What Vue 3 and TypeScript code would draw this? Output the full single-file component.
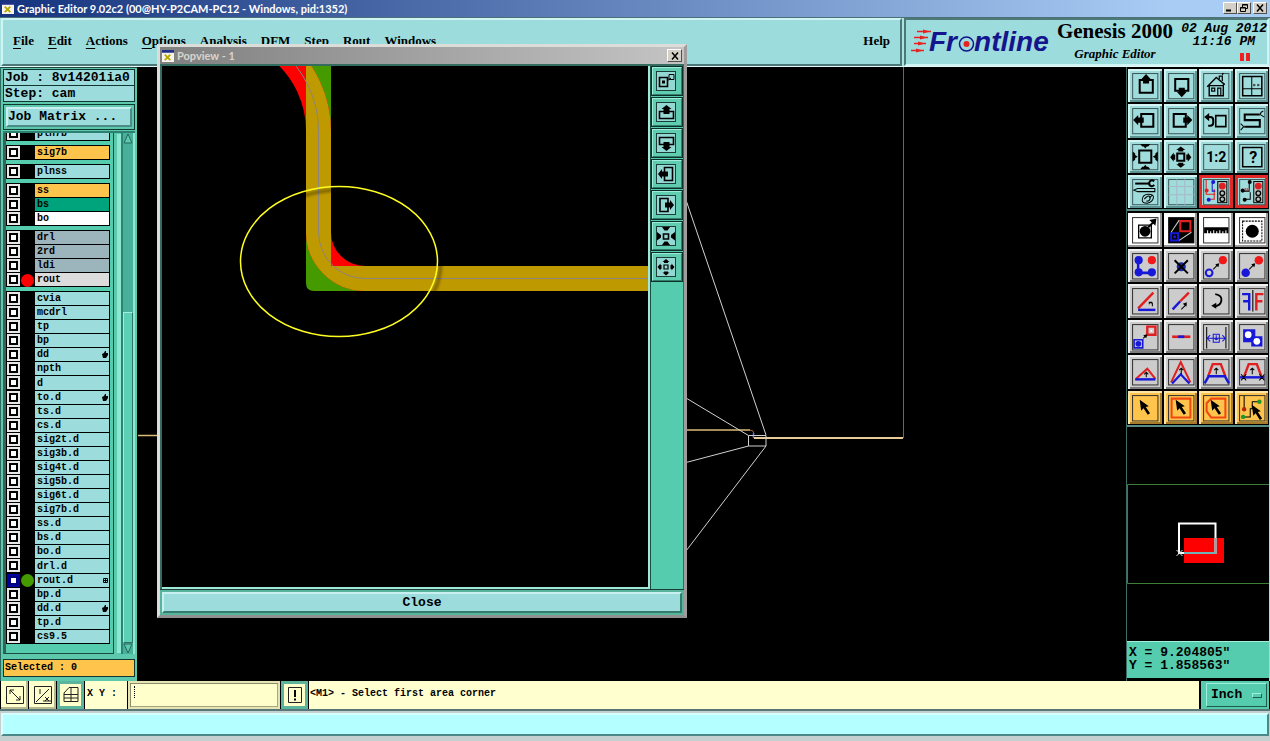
<script setup lang="ts">
import { ref } from 'vue'

interface Layer {
  name: string
  tone?: string
  dot?: string
  mark?: string
  on?: boolean
}

interface Tool {
  label: string
  art: string
  kind?: string
}

const menus = ['File', 'Edit', 'Actions', 'Options', 'Analysis', 'DFM', 'Step', 'Rout', 'Windows']

const plain = (names: string[]): Layer[] => names.map((name) => ({ name }))

const groups = ref<Layer[][]>([
  [{ name: 'pln7b' }],
  [{ name: 'sig7b', tone: 'amber' }],
  [{ name: 'plnss' }],
  [
    { name: 'ss', tone: 'amber' },
    { name: 'bs', tone: 'green' },
    { name: 'bo', tone: 'white' },
  ],
  [
    { name: 'drl', tone: 'slate' },
    { name: '2rd', tone: 'slate' },
    { name: 'ldi', tone: 'slate' },
    { name: 'rout', tone: 'grey', dot: 'red' },
  ],
  [
    ...plain(['cvia', 'mcdrl', 'tp', 'bp']),
    { name: 'dd', mark: 'hand' },
    ...plain(['npth', 'd']),
    { name: 'to.d', mark: 'hand' },
    ...plain(['ts.d', 'cs.d', 'sig2t.d', 'sig3b.d', 'sig4t.d', 'sig5b.d', 'sig6t.d', 'sig7b.d', 'ss.d', 'bs.d', 'bo.d', 'drl.d']),
    { name: 'rout.d', dot: 'lime', mark: 'grid', on: true },
    { name: 'bp.d' },
    { name: 'dd.d', mark: 'hand' },
    ...plain(['tp.d', 'cs9.5']),
  ],
])

const R = '#e02020'
const B = '#1818d8'
const line = (d: string, c = '#000', w = 1) => `<path d="${d}" fill="none" stroke="${c}" stroke-width="${w}"/>`
const fill = (d: string, c = '#000') => `<path d="${d}" fill="${c}"/>`
const dot = (x: number, y: number, r: number, c = '#000') => `<circle cx="${x}" cy="${y}" r="${r}" fill="${c}"/>`
const ring = (x: number, y: number, r: number, c = '#000', w = 1) =>
  `<circle cx="${x}" cy="${y}" r="${r}" fill="none" stroke="${c}" stroke-width="${w}"/>`
const lights = `<rect x="18.5" y="6.5" width="9" height="21" fill="#b8c4c4" stroke="#000"/>` +
  dot(23, 11, 3.4, R) + ring(23, 18, 2.3, '#000', 1.3) + ring(23, 24, 2.3, '#000', 1.3)

const viewTools: Tool[] = [
  { label: 'Pan up', art: line('M11.5 11h13v12.500h-13z', '#000', 2) + fill('M17.800 5l5 5.500h-2v4h-6v-4h-2z') },
  { label: 'Pan down', art: line('M11 10h13v11.500h-13z', '#000', 2) + fill('M17.500 28l5-5.500h-2v-4h-6v4h-2z') },
  {
    label: 'Home',
    art: line('M8 17.500L17 8.500 25.500 15.500M10 16.500v10h14v-11M9.500 16.500h15', '#000', 1.4) +
      line('M12.500 19h3v3h-3zM18.500 26v-7h3v7M20 10V7h3v5M23 6l1-2', '#000', 1.2),
  },
  { label: 'Window layout', art: line('M7.500 7.500h19v19h-19z', '#000', 1.5) + line('M16.500 7.500v19M7.500 19.500h19') + line('M18 17l2-2m0 2l-2-2M22 17l2-2m0 2l-2-2', '#444') },
  { label: 'Pan left', art: line('M13 10h12v12.500H13z', '#000', 2) + fill('M5 16l5-5v2.500h5.500v5H10V21z') },
  { label: 'Pan right', art: line('M9.500 10h12v12.500h-12z', '#000', 2) + fill('M28 16l-5-5v2.500h-4v5h4V21z') },
  { label: 'Previous view', art: line('M16.500 11.500h10v11h-10z', '#000', 1.6) + line('M8 13h3q3 0 3 3v2.500q0 3-3 3H9', '#000', 2) + fill('M5 13l5-4v8z') },
  { label: 'Swap', art: line('M24.500 10.500h-15V16h15v6.500H9', '#000', 2) + line('M28 7q-3 1-3 3.500M29 13l-4-2.500M5.500 19.500l3 3M5.500 26l3-3.500') },
  {
    label: 'Zoom out',
    art: line('M11 10.500h12v12H11z', '#000', 2) +
      fill('M12 4h10l-2 2.500h-1.500l-1.500 2-1.500-2H14zM12 29h10l-2-2.500h-1.500l-1.500-2-1.500 2H14zM4.500 11.500v10l2.500-2V18l2.500-1.500L7 15v-1.500zM29.500 11.500v10l-2.500-2V18l-2.500-1.500L27 15v-1.500z'),
  },
  {
    label: 'Zoom in',
    art: line('M13 13.500h7v7h-7z', '#000', 2) +
      fill('M16.500 6.500l4.500 3.500h-2v1.500h-5V10h-2zM16.500 27.500l4.500-3.500h-2v-1.500h-5V24h-2zM6 17l3.500-4.500v2H11v5H9.500v2zM27 17l-3.500-4.500v2H22v5h1.500v2z'),
  },
  { label: 'Scale one to two', art: '<text x="17" y="21.500" font-family="Roboto, sans-serif" font-size="14" font-weight="700" text-anchor="middle">1:2</text>' },
  { label: 'Query', art: line('M7.500 7.500h19v19h-19z', '#000', 1.5) + '<text x="18" y="23" font-family="Roboto, sans-serif" font-size="16" text-anchor="middle">?</text>' },
  {
    label: 'Setup',
    art: line('M7 8.500h14', '#000', 2) + line('M26 6q-4-2-5 1.500v2q2 3 5 .500', '#000', 2) +
      line('M5.500 15l4-1.500h17v3h-17z') + line('M14 25q0-6 6-6 6 0 5 4-1 4-6 5-5 0-5-3zM16 24q4-5 6-2 0 4-4 4M21 23l3-3'),
  },
  { label: 'Grid', art: line('M4.500 11.500h25M4.500 19.500h25M12.500 4.500v25M20.500 4.500v25', '#a8b8c4'), kind: 'soft' },
  { label: 'Highlight nets', art: line('M7 5v14h9M10 24h5V14', R) + line('M13 7v9h3', B) + dot(14, 7, 2, B) + dot(7.5, 15.5, 2, R) + dot(9.5, 24.5, 2, B) + lights, kind: 'alert' },
  { label: 'Compare nets', art: line('M14 7v9h-6M9 24h6v-7') + line('M10 13v3m2-3v3m2-3v3', R) + dot(14.5, 7, 2) + dot(7.5, 15.5, 2) + dot(9.5, 24.5, 2) + lights, kind: 'alert' },
]

const editTools: Tool[] = [
  { label: 'Move out', kind: 'white', art: line('M10.500 12h12.500v12.500H10.500z', '#000', 1.3) + dot(16.8, 18, 5.3) + line('M20 14l7-7', '#000', 2) + fill('M21 7l7-1.500-1 7z') },
  {
    label: 'Stretch',
    kind: 'white',
    art: fill('M4.500 4.500h25v25h-25z') + line('M16 8h10v10H16z', R, 2) + line('M7 20h7v7H7z', B, 2) + line('M7 19L15 7M15 27l12-8', '#ccc') + dot(10.5, 23.5, 1.5, B),
  },
  { label: 'Measure', kind: 'white', art: fill('M5 14h24v6h-2v-3h-1v3h-2v-2h-1v2h-2v-3h-1v3h-2v-2h-1v2h-2v-3h-1v3h-2v-2h-1v2H9v-3H8v3H5z') },
  { label: 'Select feature', kind: 'white', art: dot(17, 18, 6.4) + '<rect x="7.500" y="8" width="19" height="19.500" fill="none" stroke="#000" stroke-dasharray="2 1"/>' },
  { label: 'Add polyline', art: line('M10 11v12.500h13', B, 2.5) + dot(10.5, 11, 4, B) + dot(10.5, 23, 4, B) + dot(23.5, 23, 4, B) + dot(23.5, 11, 4, '#f01818') },
  { label: 'Delete', art: dot(17, 17.5, 4.5, '#1828a0') + line('M10.500 11l13 13M23.500 11l-13 13', '#000', 2) },
  { label: 'Move', art: ring(10, 23.5, 3.3, B, 2) + dot(23.5, 11, 4, '#f01818') + line('M14 20l5-5') + fill('M20 14l-4 1 3 3z') },
  { label: 'Copy', art: dot(10.5, 23.5, 4.2, B) + dot(23.5, 11, 4.2, '#f01818') + line('M14 20l5-5') + fill('M20 14l-4 1 3 3z') },
  { label: 'Rotate', art: line('M10 24L25 8.500', R, 2.4) + line('M10 25.500h17', B, 2.4) + line('M24 22v-3l-3-1m0 2v-2h3') },
  { label: 'Segment', art: line('M8.500 25L16 17', B, 2.4) + line('M16 17L24.500 8.500', R, 2.4) + line('M17 25l5-5') + fill('M22.500 18l-4 1.500 3.500 3z') },
  { label: 'Turn', art: line('M16 10q7 1 6 6.500-1 5-7 5.500', '#000', 1.8) + fill('M12 21.500l5-3v6z') },
  { label: 'Mirror', art: line('M7 10h7v16M8 17h6', B, 2.4) + line('M28 10h-7v16M27 17h-6', R, 2.4) + line('M17.500 6v21', '#333', 1.4) },
  { label: 'Scale', art: line('M19 6.500h8v8h-8z', R, 2.4) + dot(23, 10.5, 1, '#fff') + line('M6 19.500h8.500v8H6z', B, 1.6) + dot(10.2, 23.5, 2.8, B) + line('M15 18l3-3') + fill('M19 14l-4 1 3 3z') },
  { label: 'Extend', art: line('M8 16.500h18', R, 2.6) + line('M14 16.500h6', B, 2.6) },
  { label: 'Fit width', art: line('M7.500 7v21M26.500 7v21', '#222', 1.2) + line('M8 18h18M11 15l-3 3 3 3M23 15l3 3-3 3M14 14h6v8h-6zM17 15v5M15.500 19h3', B) },
  { label: 'Resize', art: fill('M8 9h12v7h7v10H16v-4H8z', B) + dot(13, 14.5, 3.3, '#fff') + dot(21.5, 21, 3.3, '#fff') },
  { label: 'Angle low', art: line('M8 23.500l11-10 8 10', R, 2) + line('M7 24h20', B, 2.4) + line('M18 22v-5m-2 2l2-2 2 2') },
  { label: 'Angle high', art: line('M7 27L16.500 7 26 27', R, 2) + line('M8 28l8.500-9 8.500 9', B, 2.2) + line('M17 19v-6m-2 2l2-2 2 2') },
  { label: 'Trapezoid', art: line('M9 21l4.500-12h8L26 21', R, 2.4) + line('M5.500 28l4-7h16l4 7', B, 2.4) + line('M17 19v-6m-2 2l2-2 2 2') },
  { label: 'Trapezoid cut', art: line('M9 21l4.500-12h8L26 21', R, 2.4) + line('M5 22h24', B, 2.4) + line('M17 19v-6m-2 2l2-2 2 2M6 19l5 6m0-6l-5 6M24 19l5 6m0-6l-5 6') },
  { label: 'Pick', kind: 'amber', art: '' },
  { label: 'Pick in box', kind: 'amber', art: line('M7.500 7.500h18.500v18.500H7.500z', '#f04810', 2) },
  { label: 'Pick in polygon', kind: 'amber', art: line('M12 7.500h14v18.500H12L7.500 20v-8z', '#f04810', 2) },
  { label: 'Pick net', kind: 'amber', art: line('M9 5v13M8 25.500h7v-8h2v-7h8') + dot(9, 18, 2.2, '#b02810') + dot(8, 25.5, 2.2, '#209828') + dot(24, 10.5, 2.2, '#209828') },
]
const arrow = 'M11.500 8.500l9 6.500-3 .800 4.200 6.200-2.200 1.500-4.200-6.500-2.300 2.500z'

const popTools: Tool[] = [
  { label: 'Overview', art: line('M7.500 10.500h8v9h-8z', '#000', 1.6) + line('M17 7.500h5v5h-5zM15 14l4-3') + fill('M10 13.500h3v3h-3z') },
  { label: 'View up', art: line('M7.500 20.500v-7h14v7z', '#000', 1.6) + fill('M14.500 7l5 4h-2v5h-6v-5h-2z') },
  { label: 'View down', art: line('M7.500 8.500h14v7h-14z', '#000', 1.6) + fill('M14.500 22l5-4h-2v-5h-6v5h-2z') },
  { label: 'View left', art: line('M12.500 7.500h8v13h-8z', '#000', 1.6) + fill('M6 14l4-5v2.500h6v5h-6V19z') },
  { label: 'View right', art: line('M8 7.500h8v13H8z', '#000', 1.6) + fill('M22 14l-4-5v2.500h-5v5h5V19z') },
  { label: 'View out', art: line('M11.500 12h5v5h-5z', '#000', 1.6) + fill('M10 5h8l-2.500 3.500h-3zM10 23h8l-2.500-3.500h-3zM5 10v8.500l4-3v-2.500zM23 10v8.500l-4-3v-2.500z') },
  { label: 'View in', art: line('M12 12h4v4h-4z', '#000', 1.2) + fill('M14 6l3.500 3h-1.500v1h-4V9h-1.500zM14 22.500l3.500-3h-1.500v-1h-4v1h-1.500zM5.500 14l3-3.500V12h1v4h-1v1.500zM22.500 14l-3-3.500V12h-1v4h1v1.500z') },
]

const coords = ref('')
</script>

<template>
  <div class="app">
    <header class="titlebar">
      <svg class="appicon" viewBox="0 0 13 13" aria-hidden="true">
        <rect width="13" height="13" fill="#f4f4ea" /><rect width="13" height="3" fill="#203088" />
        <path d="M3 5l6 6M9 5l-6 6" stroke="#b8a800" stroke-width="2" />
      </svg>
      <h1>Graphic Editor 9.02c2 (00@HY-P2CAM-PC12 - Windows, pid:1352)</h1>
      <button class="winbtn" aria-label="Minimize"><svg viewBox="0 0 10 8"><path d="M1 6.500h5" stroke="#000" stroke-width="2" /></svg></button>
      <button class="winbtn" aria-label="Restore">
        <svg viewBox="0 0 10 8"><path d="M3.500 3V.500h5v4H6.500M1.500 3.500h5v4h-5zM1.500 4h5M3.500 1h5" fill="none" stroke="#000" /></svg>
      </button>
      <button class="winbtn apart" aria-label="Close window"><svg viewBox="0 0 10 8"><path d="M2 .500l6 7M8 .500l-6 7" stroke="#000" stroke-width="1.500" /></svg></button>
    </header>

    <div class="top">
      <nav class="menubar">
        <button v-for="m in menus" :key="m" class="menu"><u>{{ m[0] }}</u>{{ m.slice(1) }}</button>
        <button class="menu help">Help</button>
      </nav>
      <div class="brand">
        <svg class="logo" viewBox="0 0 142 40" role="img" aria-label="Frontline">
          <path d="M6 5.500h14M3 11.500h14M3 17.500h12M0 24.500h13" stroke="#e82020" stroke-width="1.500" />
          <path d="M12 3.500l7 2-7 2zM9 9.500l7 2-7 2zM7 15.500l7 2-7 2zM5 22.500l7 2-7 2z" fill="#e82020" />
          <text x="18" y="25" class="logotype">Fr<tspan fill="none">o</tspan>ntline</text>
          <circle cx="55.500" cy="18" r="7" fill="none" stroke="#14148c" stroke-width="1.500" />
          <circle cx="55.500" cy="18" r="3" fill="#e82020" />
        </svg>
        <div class="product">
          <strong>Genesis 2000</strong>
          <em>Graphic Editor</em>
        </div>
        <div class="clock">
          <span>02 Aug 2012</span>
          <span class="time">11:16 PM</span>
          <span class="pause"><i></i><i></i></span>
        </div>
      </div>
    </div>

    <main class="work">
      <aside class="side">
        <div class="field">Job : 8v14201ia0</div>
        <div class="field">Step: cam</div>
        <div class="matrixbox"><button class="matrix">Job Matrix ...</button></div>
        <div class="layers">
          <div class="list">
            <ul v-for="(g, gi) in groups" :key="gi" class="group" :class="{ first: gi === 0, last: gi === groups.length - 1 }">
              <li v-for="l in g" :key="l.name" class="row">
                <input :id="'layer-' + l.name" v-model="l.on" type="checkbox" class="tick" />
                <span class="slot"><span v-if="l.dot" class="disc" :class="l.dot"></span></span>
                <label :for="'layer-' + l.name" class="name" :class="l.tone">
                  {{ l.name }}
                  <svg v-if="l.mark" class="mark" viewBox="0 0 6 7" aria-hidden="true">
                    <path v-if="l.mark === 'hand'" d="M0 3l2-1 1-2 1 0v2h2v2l-2 3H1z" />
                    <path v-else d="M1.500 1.500h4v4h-4zM3.500 1.500v4M1.500 3.500h4" fill="none" stroke="#000" />
                  </svg>
                </label>
              </li>
            </ul>
          </div>
          <div class="scroll">
            <svg viewBox="0 0 10 11"><path d="M1 10L5 1l4 9z" fill="#5cc8ac" stroke="#246858" /></svg>
            <div class="trough"><div class="thumb"></div></div>
            <svg viewBox="0 0 10 11"><path d="M1 1l4 9 4-9z" fill="#5cc8ac" stroke="#246858" /></svg>
          </div>
        </div>
        <div class="selected">Selected : 0</div>
      </aside>

      <section class="canvas">
        <svg viewBox="137 67 989 614" preserveAspectRatio="xMinYMin slice" aria-label="Board view">
          <path d="M903.500 60V438" stroke="#5060d0" />
          <path d="M138 435.500h24M686 430h64" stroke="#d8bc78" stroke-width="1.500" />
          <path d="M750 430q4 0 4 4" fill="none" stroke="#a85c38" />
          <path d="M753.500 433v5" stroke="#6070e0" stroke-width="1.500" />
          <path d="M754 438h149" stroke="#e8cc98" stroke-width="2" />
          <path d="M748.500 435.500h17.500v10.500h-17.500zM686 200l80 235M686 398l62.500 37.500M686 462.500l62.500-16.500M686 551l80-105" fill="none" stroke="#d0d0d0" />
        </svg>
      </section>

      <aside class="tools">
        <div class="grid views">
          <button v-for="t in viewTools" :key="t.label" class="tool" :class="t.kind" :aria-label="t.label">
            <svg viewBox="0 0 33 33"><rect x="4.500" y="4.500" width="25" height="25" fill="none" stroke="#3c5858" /><g v-html="t.art" /></svg>
          </button>
        </div>
        <div class="grid edits">
          <button v-for="t in editTools" :key="t.label" class="tool" :class="t.kind || 'steel'" :aria-label="t.label">
            <svg viewBox="0 0 33 33">
              <rect x="4.500" y="4.500" width="25" height="25" fill="none" stroke="#333" />
              <g v-html="t.art" />
              <path v-if="t.kind === 'amber'" :d="arrow" :transform="t.label === 'Pick net' ? 'translate(5 5)' : undefined" />
            </svg>
          </button>
        </div>
        <svg class="mini" viewBox="1127 428 142 212" aria-label="Panel overview">
          <path d="M1269 484.500h-141.500v99H1269" fill="none" stroke="#3c8038" />
          <path d="M1184 538h40v25h-40z" fill="#f00" />
          <path d="M1179 523.500h36.500v29.500H1179z" fill="none" stroke="#fff" stroke-width="2" />
          <path d="M1215.500 538v15h-31.500" fill="none" stroke="#70b0b8" stroke-width="2" />
          <path d="M1176.500 550l6 6M1182.500 550l-6 6" stroke="#ddd" />
        </svg>
        <div class="readout"><span>X = 9.204805"</span><span>Y = 1.858563"</span></div>
      </aside>
    </main>

    <footer>
      <div class="command">
        <button class="cmd" aria-label="Line mode">
          <svg viewBox="0 0 20 20"><path d="M1.500 1.500h17v17h-17zM5 5l10 10M5 9V5h4M15 11v4h-4" fill="none" stroke="#222" /></svg>
        </button>
        <button class="cmd" aria-label="Angle mode">
          <svg viewBox="0 0 20 20"><path d="M1.500 1.500h17v17h-17zM3 17L16 4M7 4v5M10 16h8M12 12l4 4m0-4l-4 4" fill="none" stroke="#222" /></svg>
        </button>
        <button class="cmd teal" aria-label="Snap to grid">
          <svg viewBox="0 0 20 20"><path d="M3 16.500V8l5-5.500h9v14zM3 9.500h14M10 2.500v14M3 13h14" fill="none" stroke="#222" /></svg>
        </button>
        <label for="xy" class="xy">X Y :</label>
        <div class="entry"><input id="xy" v-model="coords" type="text" /><span class="caret"></span></div>
        <button class="cmd teal" aria-label="Alert">
          <svg viewBox="0 0 20 20"><path d="M3.500 2.500h13v15h-13z" fill="none" stroke="#222" /><path d="M10 5v7M10 13.500v2" stroke="#000" stroke-width="2" /></svg>
        </button>
        <output class="hint">&lt;M1&gt; - Select first area corner</output>
        <div class="unitbox"><button class="unit">Inch<i></i></button></div>
      </div>
      <div class="status"><div></div></div>
    </footer>

    <section class="popview" aria-label="Popview - 1">
      <div class="poptitle">
        <svg class="appicon" viewBox="0 0 13 13" aria-hidden="true">
          <rect width="13" height="13" fill="#f4f4ea" /><rect width="13" height="3" fill="#203088" />
          <path d="M3 5l6 6M9 5l-6 6" stroke="#b8a800" stroke-width="2" />
        </svg>
        <h2>Popview - 1</h2>
        <button class="winbtn" aria-label="Close popview"><svg viewBox="0 0 10 8"><path d="M2 .500l6 7M8 .500l-6 7" stroke="#000" stroke-width="1.500" /></svg></button>
      </div>
      <div class="popbody">
        <svg class="trace" viewBox="162 66 486 522" preserveAspectRatio="xMinYMin slice" aria-label="Trace detail">
          <defs>
            <clipPath id="rout"><path d="M306 60h25v206h320v25H314q-8 0-8-8z" /></clipPath>
            <filter id="soft"><feGaussianBlur stdDeviation="1.500" /></filter>
          </defs>
          <path d="M306 60h25v206h320v25H314q-8 0-8-8z" fill="#459a00" />
          <g fill="none">
            <path d="M280.300 50A105 105 0 0 1 318.500 131V232A46.500 46.500 0 0 0 365 278.500H652" stroke="#f00" stroke-width="25" />
            <path d="M280.300 50A105 105 0 0 1 318.500 131V232A46.500 46.500 0 0 0 365 278.500H652" stroke="#bf9900" stroke-width="25" clip-path="url(#rout)" />
            <path d="M280.300 50A105 105 0 0 1 318.500 131V232A46.500 46.500 0 0 0 365 278.500H652" stroke="#8c8480" />
          </g>
          <ellipse cx="342" cy="265" rx="98.500" ry="75" fill="none" stroke="#000" stroke-opacity=".4" stroke-width="3" filter="url(#soft)" />
          <ellipse cx="339" cy="261.500" rx="98.500" ry="75" fill="none" stroke="#ffff20" stroke-width="1.500" />
        </svg>
        <div class="poptools">
          <button v-for="t in popTools" :key="t.label" class="poptool" :aria-label="t.label">
            <svg viewBox="0 0 28 28"><rect x="4.500" y="4.500" width="19" height="19" fill="#94d8d4" stroke="#1c3c38" /><g v-html="t.art" /></svg>
          </button>
        </div>
      </div>
      <div class="closebox"><button class="close">Close</button></div>
    </section>
  </div>
</template>

<style>
html,
body,
#app {
  height: 100%;
  margin: 0;
  background: #000;
}
</style>

<style scoped>
.app {
  position: relative;
  display: flex;
  flex-direction: column;
  min-height: 100vh;
  overflow: hidden;
  background: #000;
  color: #000;
  font: bold 10px/12px "Liberation Mono", monospace;
}
button,
input {
  box-sizing: border-box;
  margin: 0;
  padding: 0;
  border: 0;
  border-radius: 0;
  font: inherit;
  color: inherit;
}
svg {
  display: block;
}

.titlebar {
  display: flex;
  align-items: center;
  height: 17px;
  padding: 0 3px 1px 2px;
  background: linear-gradient(90deg, #16347e, #a8ccf4 92%);
  box-sizing: border-box;
}
.appicon {
  width: 12px;
  height: 12px;
  margin-right: 3px;
}
h1,
h2 {
  flex: 1;
  margin: 0;
  font: bold 11px/15px Lato, sans-serif;
  color: #fff;
  white-space: nowrap;
}
.winbtn {
  display: grid;
  place-items: center;
  width: 14px;
  height: 12px;
  background: #d4d0c8;
  border: 1px solid;
  border-color: #fff #505050 #505050 #fff;
}
.winbtn svg {
  width: 10px;
  height: 8px;
}
.apart {
  margin-left: 2px;
}

.top {
  display: flex;
  gap: 2px;
  height: 50px;
  padding: 0 1px;
  background: #a8e4e0;
  box-sizing: border-box;
  border-top: 1px solid #4c7078;
  border-bottom: 1px solid #e0f8f8;
}
.menubar,
.brand {
  display: flex;
  box-sizing: border-box;
  background: #9cdcdc;
  border: 2px solid;
  border-color: #d0f4f4 #4c7878 #4c7878 #d0f4f4;
}
.menubar {
  flex: 1;
  gap: 14px;
  padding: 0 10px 2px;
}
.menu {
  background: none;
  font: bold 13px/18px "Liberation Serif", serif;
}
.menu u {
  text-underline-offset: 3px;
  text-decoration-thickness: 1px;
}
.help {
  margin-left: auto;
}
.brand {
  width: 365px;
  border-color: #4c7878 #d0f4f4 #d0f4f4 #4c7878;
}
.logo {
  flex: none;
  width: 142px;
  height: 40px;
  margin: 6px 0 0 5px;
}
.logotype {
  font: italic bold 28px "Liberation Sans", sans-serif;
  fill: #14148c;
}
.product {
  display: flex;
  flex-direction: column;
  width: 120px;
  margin-left: 2px;
  text-align: center;
}
.product strong {
  font: bold 21px/22px "Liberation Serif", serif;
}
.product em {
  font: italic bold 13px/24px "Liberation Serif", serif;
}
.clock {
  display: flex;
  flex: 1;
  flex-direction: column;
  align-items: flex-end;
  padding-top: 2px;
  font: italic bold 13px/13px "Liberation Mono", monospace;
}
.time {
  margin-right: 12px;
}
.pause {
  display: flex;
  gap: 2px;
  margin: 5px 17px 0 0;
}
.pause i {
  width: 4px;
  height: 8px;
  background: #f02020;
}

.work {
  display: flex;
  flex: 1;
}
.side {
  display: flex;
  flex-direction: column;
  width: 137px;
  padding: 1px 2px 4px;
  box-sizing: border-box;
  background: #5cc8ac;
  border-left: 1px solid #2c6c60;
  border-top: 1px solid #204840;
}
.field {
  height: 15px;
  padding-left: 1px;
  border: 1px solid #103830;
  background: #9cdcdc;
  font-size: 13px;
  line-height: 15px;
  white-space: pre;
}
.field + .field {
  border-top: 0;
}
.matrixbox {
  margin-top: 2px;
  padding: 2px;
  border: 1px solid #103830;
}
.matrix {
  display: block;
  width: 100%;
  height: 20px;
  background: #9cdcdc;
  border: 2px solid;
  border-color: #c8f0f0 #4c8c88 #4c8c88 #c8f0f0;
  font-size: 13px;
  line-height: 16px;
  text-align: left;
}
.layers {
  display: flex;
  flex: 1;
  margin-top: 1px;
  padding-bottom: 3px;
  border-top: 2px solid #2c8070;
}
.list {
  display: flex;
  flex: 1;
  flex-direction: column;
  gap: 4px;
  padding: 0 3px 9px 0;
  border-left: 3px solid #346458;
  border-right: 1px solid #1c4c40;
  border-bottom: 1px solid #1c4c40;
  background: #56ccae;
}
.group {
  display: flex;
  flex-direction: column;
  margin: 0;
  padding: 1px 1px 0;
  background: #000;
  list-style: none;
}
.first {
  height: 7px;
  overflow: hidden;
  justify-content: flex-end;
}
.last {
  flex: 1;
}
.row {
  display: flex;
  flex: 1 0 14px;
}
.tick {
  appearance: none;
  width: 13px;
  height: 13px;
  background: #fff;
  border: 2px solid #e8e8e8;
  box-shadow: inset 0 0 0 2px #000;
}
.tick:checked {
  border-color: #0000a0;
  box-shadow: inset 0 0 0 2px #000078;
}
.slot {
  display: grid;
  place-items: center;
  width: 15px;
}
.disc {
  width: 13px;
  height: 13px;
  border-radius: 50%;
}
.red {
  background: #f00;
}
.lime {
  background: #459a00;
}
.name {
  display: flex;
  flex: 1;
  align-items: center;
  justify-content: space-between;
  margin-bottom: 1px;
  padding: 0 1px 0 2px;
  background: #9cdcdc;
  line-height: 13px;
}
.amber {
  background: #ffc44c;
}
.green {
  background: #00a47c;
}
.white {
  background: #fff;
}
.slate {
  background: #9cb4bc;
}
.grey {
  background: #dcdcdc;
}
.mark {
  width: 6px;
  height: 7px;
}
.scroll {
  display: flex;
  flex-direction: column;
  width: 10px;
  margin-left: 7px;
  padding: 0;
  border-left: 2px solid #2c8474;
  border-right: 2px solid #8ce8d0;
  box-shadow: -5px 0 0 -1px #8ce8d0;
  background: #48b09a;
}
.scroll svg {
  width: 10px;
  height: 11px;
}
.trough {
  display: flex;
  flex: 1;
  flex-direction: column;
  padding-top: 168px;
}
.thumb {
  flex: 1;
  background: #5cd0b4;
  border: 1px solid;
  border-color: #a0f0dc #2c7464 #2c7464 #a0f0dc;
}
.selected {
  height: 16px;
  margin-top: 2px;
  padding-left: 1px;
  border: 1px solid #103830;
  background: #ffc44c;
  line-height: 16px;
}

.canvas {
  flex: 1;
  position: relative;
}
.canvas svg {
  position: absolute;
  width: 100%;
  height: 100%;
}

.tools {
  display: flex;
  flex-direction: column;
  width: 144px;
  box-sizing: border-box;
  border-left: 1px solid #3c6c64;
  border-right: 1px solid #9ce0d4;
}
.grid {
  display: grid;
  grid-template-columns: repeat(4, 1fr);
  grid-auto-rows: 1fr;
  gap: 2px;
  padding: 2px 1px 1px;
  border-bottom: 2px solid #5c8c88;
  background: #000;
}
.views {
  height: 139px;
}
.edits {
  height: 211px;
}
.tool {
  display: grid;
  min-height: 0;
  overflow: hidden;
  background: #a0dcdc;
  box-shadow: inset 2px 2px 0 #d4f4f4, inset -2px -2px 0 #5c9494;
}
.tool svg {
  width: 100%;
  height: 100%;
  min-height: 0;
}
.alert {
  box-shadow: inset 0 0 0 3px #e02828;
}
.steel {
  background: #cccccc;
  box-shadow: inset 2px 2px 0 #f0f0f0, inset -2px -2px 0 #7c7c7c;
}
.tool.white {
  background: #fff;
  box-shadow: inset -2px -2px 0 #989898;
}
.tool.amber {
  background: #ffc44c;
  box-shadow: inset 2px 2px 0 #ffe4a8, inset -2px -2px 0 #a87c28;
}
.mini {
  flex: 1;
  width: 100%;
  min-height: 0;
  background: #000;
}
.readout {
  display: flex;
  flex-direction: column;
  height: 37px;
  padding: 4px 2px 0;
  box-sizing: border-box;
  background: #56ccae;
  border-top: 1px solid #a0f0dc;
  margin-bottom: 3px;
  font-size: 13px;
  line-height: 13px;
  white-space: pre;
}

.command {
  display: flex;
  gap: 1px;
  height: 28px;
  padding: 0 1px;
}
.cmd {
  display: grid;
  place-items: center;
  width: 27px;
  background: #ffffcc;
  box-shadow: inset -2px -2px 0 #b8b890;
}
.cmd svg {
  width: 20px;
  height: 20px;
  background: #ffffcc;
}
.teal {
  box-shadow: inset 0 0 0 3px #5cb49c;
}
.xy,
.hint {
  background: #ffffd0;
  line-height: 26px;
  white-space: pre;
}
.xy {
  width: 40px;
  padding-left: 2px;
}
.entry {
  position: relative;
  width: 152px;
}
.entry input {
  width: 100%;
  height: 100%;
  padding: 0 8px;
  background: #ffffcc;
  border: 2px solid #e4e4b4;
  box-shadow: inset 1px 1px 0 #8c8c68, inset -1px -1px 0 #a8a880;
}
.caret {
  position: absolute;
  top: 5px;
  left: 6px;
  height: 12px;
  border-left: 1px dotted #000;
}
.hint {
  flex: 1;
  padding-left: 1px;
}
.unitbox {
  width: 68px;
  padding: 2px 2px 2px 5px;
  margin-left: 1px;
  box-sizing: border-box;
  background: #56ccae;
}
.unit {
  display: flex;
  align-items: center;
  justify-content: space-between;
  width: 100%;
  height: 100%;
  padding: 0 4px;
  background: #56ccae;
  border: 1px solid;
  border-color: #a0f0dc #1c5c4c #1c5c4c #a0f0dc;
  font-size: 13px;
}
.unit i {
  width: 8px;
  height: 3px;
  border: 1px solid;
  border-color: #a0f0dc #1c5c4c #1c5c4c #a0f0dc;
}
.status {
  height: 32px;
  padding: 2px 1px 5px;
  box-sizing: border-box;
  background: #c4d0d0;
  border-top: 2px solid #587878;
}
.status div {
  height: 23px;
  box-sizing: border-box;
  background: #b4ffff;
  border: 2px solid;
  border-color: #d8ffff #4c8888 #4c8888 #d8ffff;
}

.popview {
  position: absolute;
  top: 44px;
  left: 157px;
  width: 530px;
  box-sizing: border-box;
  background: #c4c4c0;
  border: 3px solid;
  border-color: #dcdcd8 #a09c9c #909090 #dcdcd8;
}
.poptitle {
  display: flex;
  align-items: center;
  height: 17px;
  padding: 0 2px;
  background: linear-gradient(90deg, #808080, #c4c4c4);
}
.poptitle h2 {
  color: #d8d4cc;
}
.poptitle .winbtn {
  width: 15px;
  height: 13px;
}
.popbody {
  display: flex;
  border: 2px solid #346c60;
  border-width: 2px 1px 0 2px;
  background: #56ccae;
}
.trace {
  flex: 1;
  min-width: 0;
  height: 521px;
  background: #000;
  border-right: 2px solid #a0e8d8;
  border-bottom: 2px solid #a0e8d8;
}
.poptools {
  display: flex;
  flex-direction: column;
  gap: 1px;
  width: 32px;
  border-left: 1px solid #1c4c40;
}
.poptool {
  height: 30px;
  background: #60ccb0;
  border: 2px solid;
  border-color: #a0ecdc #347c6c #347c6c #a0ecdc;
  outline: 1px solid #0c3028;
  outline-offset: -1px;
}
.poptool svg {
  width: 28px;
  height: 28px;
  margin: -1px;
}
.closebox {
  padding: 2px;
  background: #56b49c;
  border-top: 1px solid #1c3c38;
}
.close {
  display: block;
  width: 100%;
  height: 21px;
  background: #9cdcdc;
  border: 2px solid;
  border-color: #c8f0f0 #347c6c #347c6c #c8f0f0;
  font-size: 13px;
  line-height: 17px;
}
</style>
